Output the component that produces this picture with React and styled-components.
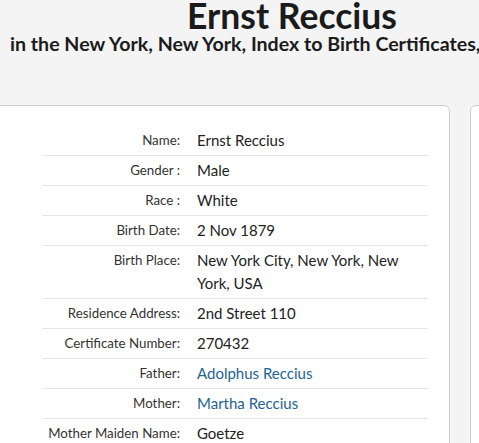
import React from "react";
import styled, { createGlobalStyle } from "styled-components";

const Global = createGlobalStyle`
  html, body { margin: 0; padding: 0; overflow: hidden; background: #f4f4f4; }
  body { font-family: Lato, "Liberation Sans", sans-serif; color: #222; }
`;

const Page = styled.div`
  width: 624px;
  margin-left: -20px;
`;

const Header = styled.header`
  white-space: nowrap;
  height: 105px;
`;

const Title = styled.h1`
  margin: 0;
  text-align: center;
  font-size: 35.5px;
  line-height: 31px;
  font-weight: 700;
  color: #1b1b1b;
`;

const Subtitle = styled.h2`
  margin: 0;
  padding-left: 30px;
  font-size: 19.6px;
  line-height: 25px;
  font-weight: 700;
  color: #1b1b1b;
`;

const Columns = styled.div`
  display: flex;
  gap: 20px;
  align-items: flex-start;
`;

const Card = styled.section`
  box-sizing: border-box;
  width: ${(p) => p.$w}px;
  min-height: 400px;
  background: #fff;
  border: 1px solid #cfcfcf;
  border-radius: 6px;
  padding: 20px 21px 0 61px;
`;

const Table = styled.div`
  display: flex;
  flex-direction: column;
`;

const Row = styled.div`
  display: grid;
  grid-template-columns: 138px 1fr;
  column-gap: 17px;
  padding: 3px 0;
  border-bottom: 1px solid ${(p) => (p.$last ? "transparent" : "#e6e6e6")};
`;

const Label = styled.div`
  text-align: right;
  white-space: nowrap;
  font-size: 13.3px;
  line-height: 23px;
  color: #333;
`;

const Value = styled.div`
  font-size: 15px;
  line-height: 23px;
  color: ${(p) => (p.$link ? "#1d6394" : "#222")};
  padding-right: 20px;
`;

const rows = [
  ["Name:", "Ernst Reccius"],
  ["Gender :", "Male"],
  ["Race :", "White"],
  ["Birth Date:", "2 Nov 1879"],
  ["Birth Place:", "New York City, New York, New York, USA"],
  ["Residence Address:", "2nd Street 110"],
  ["Certificate Number:", "270432"],
  ["Father:", "Adolphus Reccius", true],
  ["Mother:", "Martha Reccius", true],
  ["Mother Maiden Name:", "Goetze"],
];

export default function App() {
  return (
    <>
      <Global />
      <Page>
        <Header>
          <Title>Ernst Reccius</Title>
          <Subtitle>in the New York, New York, Index to Birth Certificates, 1866-1909</Subtitle>
        </Header>
        <Columns>
          <Card $w={470}>
            <Table>
              {rows.map(([l, v, link], i) => (
                <Row key={l} $last={i === rows.length - 1}>
                  <Label>{l}</Label>
                  <Value $link={link}>{v}</Value>
                </Row>
              ))}
            </Table>
          </Card>
          <Card $w={134} />
        </Columns>
      </Page>
    </>
  );
}
